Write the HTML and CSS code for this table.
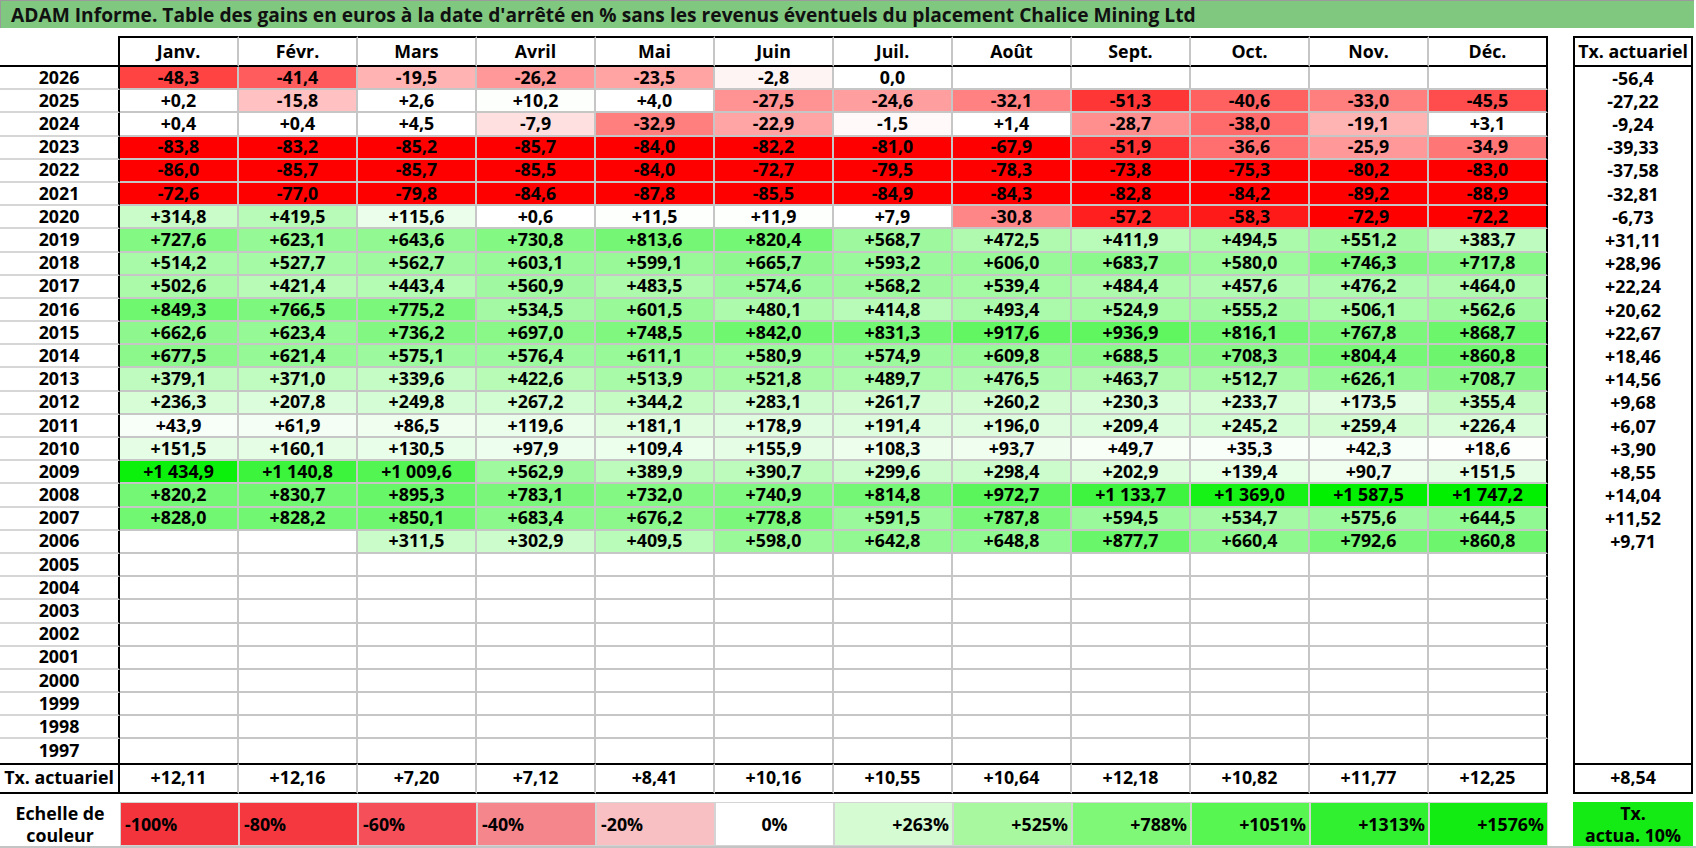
FILE: index.html
```html
<!DOCTYPE html>
<html lang="fr">
<head>
<meta charset="utf-8">
<title>ADAM Informe</title>
<link rel="stylesheet" href="styles.css">
</head>
<body>
<div class="title">ADAM Informe. Table des gains en euros à la date d'arrêté en % sans les revenus éventuels du placement Chalice Mining Ltd</div>
<div class="grid" id="grid"></div>
<div class="legend">
  <div class="lg-label">Echelle de<br>couleur</div>
  <div class="lg neg lg1">-100%</div>
  <div class="lg neg lg2">-80%</div>
  <div class="lg neg lg3">-60%</div>
  <div class="lg neg lg4">-40%</div>
  <div class="lg neg lg5">-20%</div>
  <div class="lg mid lg6">0%</div>
  <div class="lg pos lg7">+263%</div>
  <div class="lg pos lg8">+525%</div>
  <div class="lg pos lg9">+788%</div>
  <div class="lg pos lg10">+1051%</div>
  <div class="lg pos lg11">+1313%</div>
  <div class="lg pos lg12">+1576%</div>
  <div class="lg-sp"></div>
  <div class="lg-tx">Tx.<br>actua. 10%</div>
</div>
<script src="app.js"></script>
</body>
</html>
```

FILE: styles.css
```css
html, body {
  margin: 0;
  padding: 0;
  background: #ffffff;
}
body {
  width: 1696px;
  height: 848px;
  font-family: "Open Sans", "Liberation Sans", sans-serif;
  font-weight: 700;
  color: #000;
}
.title {
  box-sizing: border-box;
  width: 1694px;
  height: 28px;
  background: #80c880;
  border-top: 1px solid #9a9a9a;
  border-left: 1px solid #9a9a9a;
  padding-left: 10px;
  display: flex;
  align-items: center;
  font-size: 19.2px;
  line-height: 24px;
  color: #111;
  white-space: nowrap;
}
.grid {
  display: grid;
  grid-template-columns: 120px repeat(12, 119px) 25px 120px;
  grid-template-rows: 31px repeat(30, 23.2px) 31px;
  margin-top: 8px;
}
.c {
  box-sizing: border-box;
  display: flex;
  align-items: center;
  justify-content: center;
  font-size: 17.8px;
  line-height: 1;
  white-space: nowrap;
}
.yr {
  border-right: 2px solid #000;
  border-bottom: 2px solid #d6d6d6;
}
.m {
  border-right: 2px solid #c6c6c6;
  border-bottom: 2px solid #c6c6c6;
}
.m.last {
  border-right-color: #000;
}
.r {
  border-left: 2px solid #000;
  border-right: 2px solid #000;
}
.hd {
  border-bottom: 2px solid #000;
}
.m.hd, .r.hd {
  border-top: 2px solid #000;
}
.lastrow {
  border-bottom: 0;
}
.tx {
  border-top: 2px solid #000;
  border-bottom: 2px solid #000;
}
.sp {
  border: 0;
}
.legend {
  display: grid;
  grid-template-columns: 120px repeat(12, 119px) 25px 120px;
  height: 46px;
  box-sizing: border-box;
  margin-top: 8px;
  border-bottom: 2px solid #c4c4c4;
  width: 1696px;
}
.lg-label {
  display: flex;
  align-items: center;
  justify-content: center;
  text-align: center;
  font-size: 17.8px;
  line-height: 22px;
}
.lg {
  box-sizing: border-box;
  border: 1px solid #d4d4d4;
  display: flex;
  align-items: center;
  font-size: 17.8px;
}
.neg { justify-content: flex-start; padding-left: 4px; }
.mid { justify-content: center; }
.pos { justify-content: flex-end; padding-right: 3px; }
.lg1 { background: #f4343c; }
.lg2 { background: #f5383f; }
.lg3 { background: #f5505a; }
.lg4 { background: #f5868c; }
.lg5 { background: #f8c0c2; }
.lg6 { background: #ffffff; }
.lg7 { background: #d5fbd2; }
.lg8 { background: #a8f8a0; }
.lg9 { background: #7ff877; }
.lg10 { background: #58f650; }
.lg11 { background: #30f030; }
.lg12 { background: #12ec12; }
.lg-tx {
  background: #14ea14;
  display: flex;
  align-items: center;
  justify-content: center;
  text-align: center;
  font-size: 17.8px;
  line-height: 22px;
}
```

FILE: app.js
```javascript
(function () {
  var M = ['Janv.', 'Févr.', 'Mars', 'Avril', 'Mai', 'Juin', 'Juil.', 'Août', 'Sept.', 'Oct.', 'Nov.', 'Déc.'];
  var D = [
    ['2026', '-48,3 -41,4 -19,5 -26,2 -23,5 -2,8 0,0 _ _ _ _ _', '-56,4'],
    ['2025', '+0,2 -15,8 +2,6 +10,2 +4,0 -27,5 -24,6 -32,1 -51,3 -40,6 -33,0 -45,5', '-27,22'],
    ['2024', '+0,4 +0,4 +4,5 -7,9 -32,9 -22,9 -1,5 +1,4 -28,7 -38,0 -19,1 +3,1', '-9,24'],
    ['2023', '-83,8 -83,2 -85,2 -85,7 -84,0 -82,2 -81,0 -67,9 -51,9 -36,6 -25,9 -34,9', '-39,33'],
    ['2022', '-86,0 -85,7 -85,7 -85,5 -84,0 -72,7 -79,5 -78,3 -73,8 -75,3 -80,2 -83,0', '-37,58'],
    ['2021', '-72,6 -77,0 -79,8 -84,6 -87,8 -85,5 -84,9 -84,3 -82,8 -84,2 -89,2 -88,9', '-32,81'],
    ['2020', '+314,8 +419,5 +115,6 +0,6 +11,5 +11,9 +7,9 -30,8 -57,2 -58,3 -72,9 -72,2', '-6,73'],
    ['2019', '+727,6 +623,1 +643,6 +730,8 +813,6 +820,4 +568,7 +472,5 +411,9 +494,5 +551,2 +383,7', '+31,11'],
    ['2018', '+514,2 +527,7 +562,7 +603,1 +599,1 +665,7 +593,2 +606,0 +683,7 +580,0 +746,3 +717,8', '+28,96'],
    ['2017', '+502,6 +421,4 +443,4 +560,9 +483,5 +574,6 +568,2 +539,4 +484,4 +457,6 +476,2 +464,0', '+22,24'],
    ['2016', '+849,3 +766,5 +775,2 +534,5 +601,5 +480,1 +414,8 +493,4 +524,9 +555,2 +506,1 +562,6', '+20,62'],
    ['2015', '+662,6 +623,4 +736,2 +697,0 +748,5 +842,0 +831,3 +917,6 +936,9 +816,1 +767,8 +868,7', '+22,67'],
    ['2014', '+677,5 +621,4 +575,1 +576,4 +611,1 +580,9 +574,9 +609,8 +688,5 +708,3 +804,4 +860,8', '+18,46'],
    ['2013', '+379,1 +371,0 +339,6 +422,6 +513,9 +521,8 +489,7 +476,5 +463,7 +512,7 +626,1 +708,7', '+14,56'],
    ['2012', '+236,3 +207,8 +249,8 +267,2 +344,2 +283,1 +261,7 +260,2 +230,3 +233,7 +173,5 +355,4', '+9,68'],
    ['2011', '+43,9 +61,9 +86,5 +119,6 +181,1 +178,9 +191,4 +196,0 +209,4 +245,2 +259,4 +226,4', '+6,07'],
    ['2010', '+151,5 +160,1 +130,5 +97,9 +109,4 +155,9 +108,3 +93,7 +49,7 +35,3 +42,3 +18,6', '+3,90'],
    ['2009', '+1434,9 +1140,8 +1009,6 +562,9 +389,9 +390,7 +299,6 +298,4 +202,9 +139,4 +90,7 +151,5', '+8,55'],
    ['2008', '+820,2 +830,7 +895,3 +783,1 +732,0 +740,9 +814,8 +972,7 +1133,7 +1369,0 +1587,5 +1747,2', '+14,04'],
    ['2007', '+828,0 +828,2 +850,1 +683,4 +676,2 +778,8 +591,5 +787,8 +594,5 +534,7 +575,6 +644,5', '+11,52'],
    ['2006', '_ _ +311,5 +302,9 +409,5 +598,0 +642,8 +648,8 +877,7 +660,4 +792,6 +860,8', '+9,71'],
    ['2005', '', ''], ['2004', '', ''], ['2003', '', ''], ['2002', '', ''], ['2001', '', ''],
    ['2000', '', ''], ['1999', '', ''], ['1998', '', ''], ['1997', '', '']
  ];
  var TX = '+12,11 +12,16 +7,20 +7,12 +8,41 +10,16 +10,55 +10,64 +12,18 +10,82 +11,77 +12,25'.split(' ');

  var g = document.getElementById('grid');

  function cell(text, cls, bg) {
    var d = document.createElement('div');
    d.className = 'c ' + cls;
    d.textContent = text;
    if (bg) { d.style.backgroundColor = bg; }
    g.appendChild(d);
  }

  function fmt(s) {
    if (!s || s === '_') { return ''; }
    return s.replace(/(\d)(\d{3}),/, '$1\u00a0$2,');
  }

  function color(s) {
    if (!s || s === '_') { return ''; }
    var v = parseFloat(s.replace(',', '.'));
    var t, c, gr;
    if (v < 0) {
      t = Math.min(-v / 65, 1);
      c = Math.round(255 * (1 - t));
      return 'rgb(255,' + c + ',' + c + ')';
    }
    if (v > 0) {
      t = Math.min(v / 1500, 1);
      c = Math.round(255 * (1 - t));
      gr = Math.round(255 - 15 * t);
      return 'rgb(' + c + ',' + gr + ',' + c + ')';
    }
    return '';
  }

  cell('', 'yr hd');
  M.forEach(function (m, i) { cell(m, 'm hd' + (i === 11 ? ' last' : '')); });
  cell('', 'sp');
  cell('Tx. actuariel', 'r hd');

  D.forEach(function (r, ri) {
    var lr = ri === D.length - 1 ? ' lastrow' : '';
    var vals = r[1] ? r[1].split(' ') : [];
    cell(r[0], 'yr' + lr);
    for (var i = 0; i < 12; i++) {
      var v = vals[i] || '';
      cell(fmt(v), 'm' + (i === 11 ? ' last' : '') + lr, color(v));
    }
    cell('', 'sp');
    cell(r[2], 'r');
  });

  cell('Tx. actuariel', 'yr tx');
  TX.forEach(function (v, i) { cell(v, 'm tx' + (i === 11 ? ' last' : '')); });
  cell('', 'sp');
  cell('+8,54', 'r tx');
})();
```
